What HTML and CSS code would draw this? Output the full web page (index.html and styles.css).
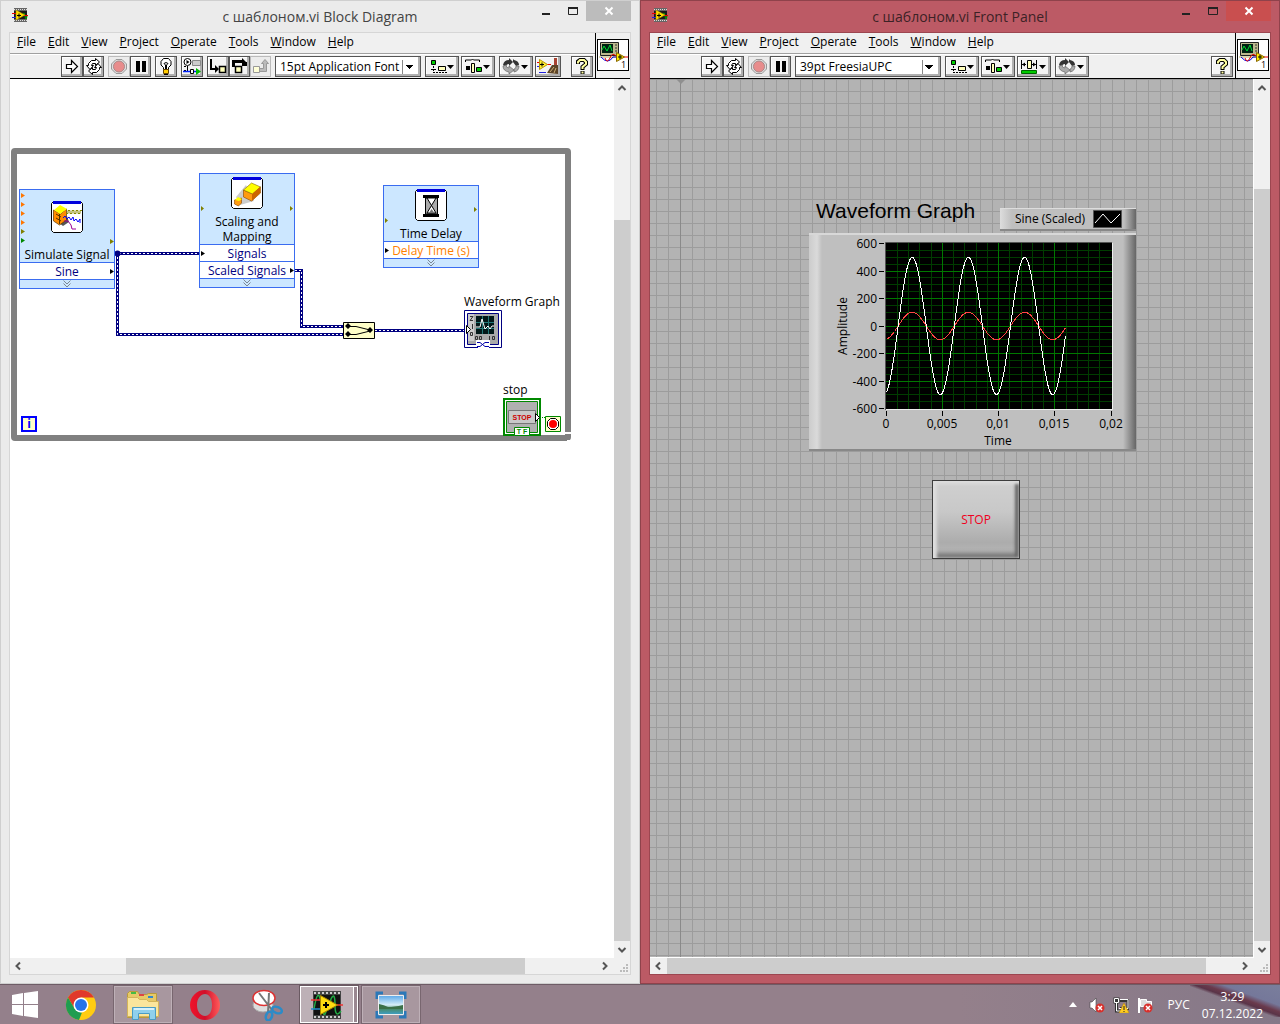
FILE: index.html
```html
<!DOCTYPE html>
<html lang="en">
<head>
<meta charset="utf-8">
<title>LabVIEW</title>
<link rel="stylesheet" href="styles.css">
</head>
<body>
<svg class="sprite" aria-hidden="true">
  <symbol id="i-app" viewBox="0 0 16 14">
    <path fill="#666" d="M2 0h13v14H2z"/><path stroke="#ddd" stroke-dasharray="1 1" d="M2 1.500h13M2 12.500h13"/>
    <path fill="#1a1a1a" d="M2 3h13v8H2z"/><path stroke="#0a0" fill="none" d="M11 8q1-6 2 0t2 0"/>
    <path stroke="#e00" d="M0 5.500h4M12 7.500h4"/><path stroke="#22d" d="M0 9.500h4"/>
    <path fill="#fd0" stroke="#a80" stroke-width=".5" d="M4 2l9 5-9 5z"/><path stroke="#000" d="M5 7.500h4M7 5.500v4"/>
  </symbol>
  <symbol id="i-run" viewBox="0 0 20 19"><path fill="#fff" stroke="#000" stroke-width="1.200" d="M4.500 7.500h5v-4l6 6-6 6v-4h-5z"/></symbol>
  <symbol id="i-loop" viewBox="0 0 20 19">
    <path fill="#fff" stroke="#000" d="M4.500 8.500v-2l3-3h4v-2l4 3.500-4 3.500v-2h-3l-1 2h2l-3.500 4-3.500-4zM15.500 10.500v2l-3 3h-4v2l-4-3.500 4-3.500v2h3l1-2h-2l3.500-4 3.500 4z"/>
  </symbol>
  <symbol id="i-abort" viewBox="0 0 20 19">
    <path fill="#ddd" stroke="#999" d="M7 2.500h6l4.500 4.500v5L13 16.500H7L2.500 12V7z"/><circle cx="10" cy="9.500" r="5.500" fill="#e88c8c" stroke="#a88"/>
  </symbol>
  <symbol id="i-pause" viewBox="0 0 20 19"><path d="M5 4h4v11H5zM11 4h4v11h-4z"/></symbol>
  <symbol id="i-bulb" viewBox="0 0 20 19">
    <path fill="#fff" stroke="#000" d="M7.500 12.500v-2L5 8V4.500l2.500-3h5l2.500 3V8l-2.500 2.500v2z"/><path fill="none" stroke="#000" d="M9.500 12V8L8 6.500l2-1 2 1L10.500 8v4"/>
    <path fill="#fc0" stroke="#640" d="M7.500 12.500h5v4h-5z"/><path d="M8 17h4v1H8z"/>
  </symbol>
  <symbol id="i-retain" viewBox="0 0 20 19">
    <circle cx="5.500" cy="5" r="3.500" fill="#fff" stroke="#000"/><path d="M4.500 3l3 2-3 2zM5 9h1v5H5zM2 9h2v1H2zM2 13h2v1H2z"/>
    <path fill="#ccc" stroke="#888" d="M10.500 3.500h8v5h-8z"/><path stroke="#02f" stroke-width="1.500" d="M1 14.500h7M12 14.500h3"/><path fill="#fff" stroke="#000" d="M8.500 12.500h3v4h-3z"/><path fill="#0b0" d="M14 11l5 3.500-5 3.500z"/>
  </symbol>
  <symbol id="i-into" viewBox="0 0 20 19">
    <path d="M2 2h2v9h3V8l4 4-4 4v-3H2z"/><path fill="#ffb" stroke="#000" stroke-width="1.500" d="M11.500 9.500h6v6h-6z"/>
  </symbol>
  <symbol id="i-over" viewBox="0 0 20 19">
    <path d="M2 3h10V1l4 4h1v4h-5V6H5v4H2z"/><path fill="#ffb" stroke="#000" stroke-width="1.500" d="M5.500 9.500h6v6h-6z"/>
  </symbol>
  <symbol id="i-out" viewBox="0 0 20 19">
    <path fill="#bbb" stroke="#999" d="M8.500 14.500v-3h4V6.500h-2l3.500-4 3.500 4h-2v8z"/><path fill="#ffffd8" stroke="#999" d="M2.500 9.500h6v6h-6z"/>
  </symbol>
  <symbol id="i-align" viewBox="0 0 32 19">
    <path fill="#0c0" stroke="#000" d="M5.500 3.500h4v4h-4z"/><path fill="#ffb" stroke="#000" d="M12.500 9.500h7v4h-7z"/>
    <path stroke="#000" d="M7.500 9v5M5 12.500h5M7 15.500h14" stroke-dasharray="2 1"/><path d="M21 8h7l-3.500 4z"/>
  </symbol>
  <symbol id="i-dist" viewBox="0 0 32 19">
    <path fill="none" stroke="#000" d="M3.500 5v-2h6l1-1 1 1h6v2"/><path d="M4 9h4v4H4z"/><path fill="#ffb" stroke="#000" d="M9.500 6.500h3v9h-3z"/><path fill="#0c0" stroke="#000" d="M14.500 10.500h5v4h-5z"/><path d="M21 8h7l-3.500 4z"/>
  </symbol>
  <symbol id="i-resize" viewBox="0 0 32 19">
    <path stroke="#000" d="M3.500 3v9M18.500 3v9M4 7.500h4M14 7.500h5"/><path d="M4 7.500l3-2v4zM18 7.500l-3-2v4z"/><path fill="#ffb" stroke="#000" d="M9.500 3.500h4v8h-4z"/><path fill="#0c0" stroke="#060" d="M3.500 13.500h15v3h-15z"/><path d="M21 8h7l-3.500 4z"/>
  </symbol>
  <symbol id="i-order" viewBox="0 0 32 19">
    <path fill="#333" d="M3 8q1-5 6-5V1l4 4-4 4V7q-3 0-3 3zM19 8q0-4-5-5l-1-1v3l3 4z"/>
    <path fill="#aaa" stroke="#666" stroke-width=".7" d="M3 9q0 5 6 6v2l5-4-5-4v2q-3 0-3-3zM19 9q0 5-5 6v-3q2 0 2-3z"/><path d="M21 8h7l-3.500 4z"/>
  </symbol>
  <symbol id="i-clean" viewBox="0 0 24 19">
    <path stroke="#e00" d="M1 5.500h3M10 7.500h5"/><path stroke="#22d" d="M1 9.500h3M3 15.500h7"/><path fill="#fe3" stroke="#b90" d="M3.500 2.500l8 5-8 5z"/><path d="M4 7h4v1H4zM5.500 5.500h1v4h-1z"/>
    <path fill="#a43" d="M18 1h3v9h-3z"/><path fill="#5c4428" d="M16 8h6v9l-11-1z"/><path stroke="#ec8" stroke-width=".8" d="M18 10l-4 5M20 11l-2 5"/>
  </symbol>
  <symbol id="i-help" viewBox="0 0 20 19">
    <path fill="none" stroke="#000" stroke-width="4" d="M6 7V4.500l2-1.500h4l2 2v2l-3.500 3v3M10.500 14v3"/><path fill="none" stroke="#ffffa0" stroke-width="2" d="M6 6.500V5l2-2h4l2 2v2l-3.500 3v2M10.500 14.500v2"/>
  </symbol>
  <symbol id="i-vi" viewBox="0 0 32 32">
    <path fill="#fff" stroke="#000" stroke-width="2" d="M0 0h32v32H0z"/><path fill="#bdb98f" stroke="#222" d="M3.500 3.500h18v13h-18z"/><path fill="#021" d="M5 5h11v9H5z"/>
    <path fill="none" stroke="#0d3" d="M5 11l2-4 3 5 3-6 2 6"/><path stroke="#333" d="M18 6h2M18 9h2M18 12h2"/>
    <path fill="#ddd8b0" d="M2 17h20v2H2z"/><path fill="none" stroke="#00d" d="M4 18q7 8 12 0h4"/><path fill="none" stroke="#e00" d="M8 19q2 6 5 0 2-6 6-2M27 18h4"/>
    <path fill="#fe0" stroke="#860" d="M19.500 13.500l8 4.500-8 4.500z"/><path d="M21 17.500h4v1h-4zM22.500 16h1v4h-1z"/>
  </symbol>
  <symbol id="i-up" viewBox="0 0 16 16"><path fill="none" stroke="#555" stroke-width="2" d="M4.500 10L8 6.500 11.500 10"/></symbol>
  <symbol id="i-down" viewBox="0 0 16 16"><path fill="none" stroke="#555" stroke-width="2" d="M4.500 6L8 9.500 11.500 6"/></symbol>
  <symbol id="i-left" viewBox="0 0 16 16"><path fill="none" stroke="#555" stroke-width="2" d="M10 4.500L6.500 8l3.500 3.500"/></symbol>
  <symbol id="i-right" viewBox="0 0 16 16"><path fill="none" stroke="#555" stroke-width="2" d="M6 4.500L9.500 8 6 11.500"/></symbol>
  <symbol id="i-grip" viewBox="0 0 16 16"><path fill="#bbb" d="M12 6h2v2h-2zM9 9h2v2H9zM12 9h2v2h-2zM6 12h2v2H6zM9 12h2v2H9zM12 12h2v2h-2z"/></symbol>
  <symbol id="i-min" viewBox="0 0 10 10"><path fill="currentColor" d="M1 7h8v2H1z"/></symbol>
  <symbol id="i-max" viewBox="0 0 10 10"><path fill="none" stroke="currentColor" d="M.5 1.500h9v7h-9z"/><path fill="currentColor" d="M0 1h10v2H0z"/></symbol>
  <symbol id="i-close" viewBox="0 0 10 10"><path stroke="#fff" stroke-width="2" d="M1.500 1.500l7 7M8.500 1.500l-7 7"/></symbol>
  <symbol id="i-more" viewBox="0 0 8 8"><path fill="none" stroke="#7a8794" d="M.5.5L4 4 7.500.5M.5 3.500L4 7l3.500-3.500"/></symbol>
</svg>

<main class="desktop">
  <section class="window">
    <header class="titlebar">
      <svg class="app-icon" viewBox="0 0 16 14"><use href="#i-app"/></svg>
      <h1 class="title">с шаблоном.vi Block Diagram</h1>
      <div class="controls">
        <button class="ctl" aria-label="Minimize"><svg viewBox="0 0 10 10"><use href="#i-min"/></svg></button>
        <button class="ctl" aria-label="Maximize"><svg viewBox="0 0 10 10"><use href="#i-max"/></svg></button>
        <button class="ctl ctl-close" aria-label="Close"><svg viewBox="0 0 10 10"><use href="#i-close"/></svg></button>
      </div>
    </header>
    <div class="client">
      <div class="head">
        <div class="bars">
          <nav class="menu">
            <button><u>F</u>ile</button><button><u>E</u>dit</button><button><u>V</u>iew</button><button><u>P</u>roject</button><button><u>O</u>perate</button><button><u>T</u>ools</button><button><u>W</u>indow</button><button><u>H</u>elp</button>
          </nav>
          <div class="toolbar">
            <div class="group">
              <button class="tool" aria-label="Run"><svg viewBox="0 0 20 19"><use href="#i-run"/></svg></button>
              <button class="tool" aria-label="Run Continuously"><svg viewBox="0 0 20 19"><use href="#i-loop"/></svg></button>
            </div>
            <div class="group">
              <button class="tool tool-off" aria-label="Abort"><svg viewBox="0 0 20 19"><use href="#i-abort"/></svg></button>
              <button class="tool" aria-label="Pause"><svg viewBox="0 0 20 19"><use href="#i-pause"/></svg></button>
            </div>
            <button class="tool" aria-label="Highlight Execution"><svg viewBox="0 0 20 19"><use href="#i-bulb"/></svg></button>
            <button class="tool" aria-label="Retain Wire Values"><svg viewBox="0 0 20 19"><use href="#i-retain"/></svg></button>
            <div class="group">
              <button class="tool" aria-label="Step Into"><svg viewBox="0 0 20 19"><use href="#i-into"/></svg></button>
              <button class="tool" aria-label="Step Over"><svg viewBox="0 0 20 19"><use href="#i-over"/></svg></button>
              <button class="tool tool-off" aria-label="Step Out"><svg viewBox="0 0 20 19"><use href="#i-out"/></svg></button>
            </div>
            <select class="font" aria-label="Text Settings"><option>15pt Application Font</option></select>
            <div class="group group-gap">
              <button class="tool tool-wide" aria-label="Align Objects"><svg viewBox="0 0 32 19"><use href="#i-align"/></svg></button>
              <button class="tool tool-wide" aria-label="Distribute Objects"><svg viewBox="0 0 32 19"><use href="#i-dist"/></svg></button>
            </div>
            <div class="group group-gap">
              <button class="tool tool-wide" aria-label="Reorder"><svg viewBox="0 0 32 19"><use href="#i-order"/></svg></button>
              <button class="tool tool-mid" aria-label="Clean Up Diagram"><svg viewBox="0 0 24 19"><use href="#i-clean"/></svg></button>
            </div>
            <button class="tool tool-end" aria-label="Help"><svg viewBox="0 0 20 19"><use href="#i-help"/></svg></button>
          </div>
        </div>
        <div class="vi"><svg viewBox="0 0 32 32"><use href="#i-vi"/><text class="vi-num" x="24" y="29">1</text></svg></div>
      </div>
      <div class="view">
        <div class="canvas diagram">
          <div class="loop"></div>
          <svg class="wires" viewBox="10 79 600 400">
            <path class="wire" d="M115 253.500h84M117.500 253v81.500H343M295 270.500h6.500v56H343M375 330.500h90"/>
            <path class="dash" d="M115 253.500h84M117.500 253v81.500H343M295 270.500h6.500v56H343M375 330.500h90"/>
            <circle cx="117.500" cy="253.500" r="3" fill="#000080"/>
            <path fill="#ffffc8" stroke="#000" d="M343.500 322.500h31v16h-31z"/>
            <path fill="none" stroke="#000" d="M348 326.500h8l14 3.500M348 334.500h8l14-3.500"/>
            <path d="M345 326l3-3 3 3-3 3zM345 334l3-3 3 3-3 3zM367 330l3-3 3 3-3 3z"/>
            <path fill="#fff" d="M563 432h8v2h-8zM567 440h3v1h-3z"/>
            <path stroke="#080" stroke-dasharray="1 1" d="M540 417.500h5"/>
          </svg>
          <div class="node node-sim">
            <div class="node-head">
              <svg class="node-icon" viewBox="0 0 32 32"><path fill="#fff" stroke="#000" d="M2.500.5h27l2 2v27l-2 2h-27l-2-2v-27z"/><path fill="#00d" d="M2 0h28v3H2z"/>
                <path fill="#555" d="M8 22l8-7 2 6-6 4z"/><path fill="#ff8c00" stroke="#530" stroke-width=".7" d="M2.500 9v11l6 4 7-5V8l-6 5z"/><path fill="#ff0" d="M3 9l6-5 7 4-7 5z"/><path stroke="#530" fill="none" d="M5 13l5 3M5 17l5 3M8.500 13v10"/>
                <path fill="none" stroke="#880" d="M15 12.500h2v-3h2v3h2v-3h2v3h2v-3h2v3h2v-3h2"/><path fill="none" stroke="#00f" d="M12 17l2-2 2 3 2-2 2 3 2-3 1 4 2-2 2 3 2-3v4"/><path fill="none" stroke="#909" d="M13 20h4l3 4 1 4h4"/></svg>
              <span>Simulate Signal</span>
            </div>
            <div class="node-row">Sine</div>
            <div class="node-foot"><svg viewBox="0 0 8 8"><use href="#i-more"/></svg></div>
            <svg class="pins" viewBox="0 0 96 100"><g fill="#f70"><path d="M2 4l4 2.500L2 9zM2 13l4 2.500L2 18zM2 22l4 2.500L2 27zM2 31l4 2.500L2 36z"/></g><path fill="#808000" d="M2 40l4 2.500L2 45zM91 50l4 2.500-4 2.500z"/><path fill="#080" d="M2 49l4 2.500L2 54z"/><path d="M91 80l4 2.500-4 2.500z"/></svg>
          </div>
          <div class="node node-map">
            <div class="node-head">
              <svg class="node-icon" viewBox="0 0 32 32"><path fill="#fff" stroke="#000" d="M2.500.5h27l2 2v27l-2 2h-27l-2-2v-27z"/><path fill="#00d" d="M2 0h28v3H2z"/>
                <path fill="#ccc" d="M5 20l10-12 8 16-14 4z"/><path fill="#ff9a10" stroke="#840" stroke-width=".6" d="M12.500 13v7l8 4 9-8v-6l-8 7z"/><path fill="#ff0" stroke="#860" stroke-width=".6" d="M12.500 13l8-7 9 4-8 7z"/><path fill="#c60" d="M21 17l8-7v6l-8 8z"/><path fill="#ff9a10" stroke="#840" stroke-width=".6" d="M3.500 23v4l4 2 3-3v-5z"/><path fill="#ff0" d="M4 23l3-3 4 2-3 2z"/></svg>
              <span>Scaling and Mapping</span>
            </div>
            <div class="node-row">Signals</div>
            <div class="node-row">Scaled Signals</div>
            <div class="node-foot"><svg viewBox="0 0 8 8"><use href="#i-more"/></svg></div>
            <svg class="pins" viewBox="0 0 96 115"><path fill="#808000" d="M2 33l3 2.500L2 38zM91 33l3 2.500-3 2.500z"/><path d="M2 78l4 2.500L2 83zM91 95l4 2.500-4 2.500z"/></svg>
          </div>
          <div class="node node-delay">
            <div class="node-head">
              <svg class="node-icon" viewBox="0 0 32 32"><path fill="#fff" stroke="#000" d="M2.500.5h27l2 2v27l-2 2h-27l-2-2v-27z"/><path fill="#00d" d="M2 0h28v3H2z"/>
                <path d="M8 6h16v3H8zM8 25h16v3H8z"/><path fill="#aaa" stroke="#000" d="M10.500 9v16h12V9z"/><path fill="#fff" stroke="#000" d="M12 9l9 15h-9l9-15z"/><path fill="#777" d="M14 24l2.500-4 3 4z"/></svg>
              <span>Time Delay</span>
            </div>
            <div class="node-row node-row-orange">Delay Time (s)</div>
            <div class="node-foot"><svg viewBox="0 0 8 8"><use href="#i-more"/></svg></div>
            <svg class="pins" viewBox="0 0 96 83"><path fill="#808000" d="M2 33l3 2.500L2 38zM91 22l3 2.500-3 2.500z"/><path d="M2 63l4 2.500L2 68z"/></svg>
          </div>
          <div class="terminal term-graph">
            <span>Waveform Graph</span>
            <svg viewBox="0 0 38 38" width="38" height="38"><path fill="#fff" stroke="#000080" d="M.5.500h37v37H.5z"/><path fill="#aaa" stroke="#000080" d="M3.500 3.500h31v31h-31z"/><path fill="#ccc" d="M4 4h6v27H4z"/>
              <path fill="#021818" d="M12 6h18v18H12z"/><path stroke="#277" d="M12 12.500h18M12 18.500h18M18.500 6v18M24.500 6v18"/><path fill="none" stroke="#fff" d="M12 17h4l2-8 3 10 3-3 2 3 2-3h2"/>
              <path stroke="#333" fill="none" d="M6 6.500h3l-3 4h3M8.500 14v5M6.500 22.500h2v3h-2zM11.500 26.500h2v3h-2zM15.500 26.500h2v3h-2zM25.500 26v4M28.500 26.500h2v3h-2z"/><path fill="#fff" stroke="#000" d="M2.500 15.500l4 4-4 4z"/>
              <path fill="#fff" stroke="#fff" d="M12.500 30.500h13v7h-13z"/><path fill="none" stroke="#00a" d="M13 32.500h3l5 4h4M13 36.500h3l5-4h4M12 37.500h2M25 37.500h2"/></svg>
          </div>
          <div class="terminal term-stop">
            <span>stop</span>
            <svg viewBox="0 0 38 38" width="38" height="38"><path fill="#fff" stroke="#080" stroke-width="2" d="M1 1h36v36H1z"/><path fill="#b0b0b0" stroke="#080" d="M3.500 3.500h31v31h-31z"/><path fill="#c8c8c8" stroke="#777" d="M5.500 12.500h27v13h-27z"/><path fill="#fff" stroke="#000" d="M32.500 15.500l4 4-4 4z"/><path fill="#fff" stroke="#080" d="M11.500 29.500h15v8h-15z"/>
              <text class="tiny tiny-red" x="19" y="22">STOP</text><text class="tiny tiny-green" x="19" y="36">T F</text></svg>
          </div>
          <div class="iter">i</div>
          <svg class="cond" viewBox="0 0 16 16"><path fill="#ffffc8" stroke="#080" d="M.5.500h15v15H.5z"/><path fill="#fff" stroke="#000" d="M5.500 2.500h5l3 3v5l-3 3h-5l-3-3v-5z"/><circle cx="8" cy="8" r="4" fill="#f00"/></svg>
        </div>
        <div class="vbar">
          <button class="arrow" aria-label="Scroll up"><svg viewBox="0 0 16 16"><use href="#i-up"/></svg></button>
          <div class="track track-a"><div class="thumb"></div></div>
          <button class="arrow" aria-label="Scroll down"><svg viewBox="0 0 16 16"><use href="#i-down"/></svg></button>
        </div>
      </div>
      <div class="hbar">
        <button class="arrow" aria-label="Scroll left"><svg viewBox="0 0 16 16"><use href="#i-left"/></svg></button>
        <div class="track track-b"><div class="thumb"></div></div>
        <button class="arrow" aria-label="Scroll right"><svg viewBox="0 0 16 16"><use href="#i-right"/></svg></button>
        <svg class="grip" viewBox="0 0 16 16"><use href="#i-grip"/></svg>
      </div>
    </div>
  </section>

  <section class="window window-active">
    <header class="titlebar">
      <svg class="app-icon" viewBox="0 0 16 14"><use href="#i-app"/></svg>
      <h1 class="title">с шаблоном.vi Front Panel</h1>
      <div class="controls">
        <button class="ctl" aria-label="Minimize"><svg viewBox="0 0 10 10"><use href="#i-min"/></svg></button>
        <button class="ctl" aria-label="Maximize"><svg viewBox="0 0 10 10"><use href="#i-max"/></svg></button>
        <button class="ctl ctl-close" aria-label="Close"><svg viewBox="0 0 10 10"><use href="#i-close"/></svg></button>
      </div>
    </header>
    <div class="client">
      <div class="head">
        <div class="bars">
          <nav class="menu">
            <button><u>F</u>ile</button><button><u>E</u>dit</button><button><u>V</u>iew</button><button><u>P</u>roject</button><button><u>O</u>perate</button><button><u>T</u>ools</button><button><u>W</u>indow</button><button><u>H</u>elp</button>
          </nav>
          <div class="toolbar">
            <div class="group">
              <button class="tool" aria-label="Run"><svg viewBox="0 0 20 19"><use href="#i-run"/></svg></button>
              <button class="tool" aria-label="Run Continuously"><svg viewBox="0 0 20 19"><use href="#i-loop"/></svg></button>
            </div>
            <div class="group">
              <button class="tool tool-off" aria-label="Abort"><svg viewBox="0 0 20 19"><use href="#i-abort"/></svg></button>
              <button class="tool" aria-label="Pause"><svg viewBox="0 0 20 19"><use href="#i-pause"/></svg></button>
            </div>
            <select class="font" aria-label="Text Settings"><option>39pt FreesiaUPC</option></select>
            <div class="group group-gap">
              <button class="tool tool-wide" aria-label="Align Objects"><svg viewBox="0 0 32 19"><use href="#i-align"/></svg></button>
              <button class="tool tool-wide" aria-label="Distribute Objects"><svg viewBox="0 0 32 19"><use href="#i-dist"/></svg></button>
              <button class="tool tool-wide" aria-label="Resize Objects"><svg viewBox="0 0 32 19"><use href="#i-resize"/></svg></button>
            </div>
            <button class="tool tool-wide" aria-label="Reorder"><svg viewBox="0 0 32 19"><use href="#i-order"/></svg></button>
            <button class="tool tool-end" aria-label="Help"><svg viewBox="0 0 20 19"><use href="#i-help"/></svg></button>
          </div>
        </div>
        <div class="vi"><svg viewBox="0 0 32 32"><use href="#i-vi"/><text class="vi-num" x="24" y="29">1</text></svg></div>
      </div>
      <div class="view">
        <div class="canvas panel">
          <div class="origin"></div>
          <svg class="origin-mark" viewBox="0 0 10 5"><path fill="#8f8f8f" d="M0 0h10L5 5z"/></svg>
          <div class="graph">
            <div class="graph-top">
              <h2 class="graph-title">Waveform Graph</h2>
              <div class="legend"><span>Sine (Scaled)</span><svg viewBox="0 0 29 18"><path fill="#000" stroke="#555" d="M.5.500h28v17H.5z"/><path fill="none" stroke="#fff" d="M2 13l8-9 8 9 9-9"/></svg></div>
            </div>
            <div class="plate">
              <svg id="chart" class="chart" viewBox="809 233 327 218" role="img" aria-label="Waveform Graph">
                <path fill="#000" d="M886 243h226v166H886z"/>
                <g id="grid"></g>
                <path fill="none" stroke="#555" d="M885.500 410V242.500H1112"/><path fill="none" stroke="#eee" d="M886 409.500h226.500V243"/>
                <polyline id="red" class="line line-red"/>
                <polyline id="white" class="line line-white"/>
                <g id="labels" class="axis"></g>
                <text class="axis mid" x="998" y="445">Time</text>
                <text class="axis mid" transform="translate(847 326) rotate(-90)">Amplitude</text>
              </svg>
            </div>
          </div>
          <button class="stop">STOP</button>
        </div>
        <div class="vbar">
          <button class="arrow" aria-label="Scroll up"><svg viewBox="0 0 16 16"><use href="#i-up"/></svg></button>
          <div class="track track-c"><div class="thumb"></div></div>
          <button class="arrow" aria-label="Scroll down"><svg viewBox="0 0 16 16"><use href="#i-down"/></svg></button>
        </div>
      </div>
      <div class="hbar">
        <button class="arrow" aria-label="Scroll left"><svg viewBox="0 0 16 16"><use href="#i-left"/></svg></button>
        <div class="track track-d"><div class="thumb"></div></div>
        <button class="arrow" aria-label="Scroll right"><svg viewBox="0 0 16 16"><use href="#i-right"/></svg></button>
        <svg class="grip" viewBox="0 0 16 16"><use href="#i-grip"/></svg>
      </div>
    </div>
  </section>
</main>

<footer class="taskbar">
  <button class="task task-start" aria-label="Start"><svg viewBox="0 0 28 28" width="28" height="28"><path fill="#fff" d="M1 4l11-2v11H1zM13 2l14-2v13H13zM1 14h11v11L1 23zM13 14h14v13l-14-2z"/></svg></button>
  <button class="task" aria-label="Chrome"><svg viewBox="0 0 32 32" width="32" height="32"><circle cx="16" cy="16" r="15" fill="#fc1"/><path fill="#e0392b" d="M3 8.500a15 15 0 0 1 26 0H16l-6.500 11z"/><path fill="#1f9d50" d="M3 8.500l6.500 11L16 23.500h1L14 31A15 15 0 0 1 3 8.500z"/><circle cx="16" cy="16" r="7.500" fill="#fff"/><circle cx="16" cy="16" r="6" fill="#2573ea"/></svg></button>
  <button class="task task-open" aria-label="File Explorer"><svg viewBox="0 0 34 30" width="34" height="30"><path fill="#e6c968" stroke="#b99a3c" d="M1.500 3.500l2-2h8l2 3h7l2-1h8v24h-29z"/><path fill="#4b4" d="M5 2h5v2H5z"/><path fill="#d44" d="M13 4h5v2h-5z"/><path fill="#38c" d="M22 6h5v2h-5z"/><path fill="#fae59c" stroke="#d3b45a" d="M1.500 7.500h10l2 2h7l2 2h10v15h-31z"/><path fill="#8fd0ec" stroke="#4a9cc4" d="M6.500 29.500v-12h23v12h-6v-6h-11v6z"/><path fill="#d8f2fc" d="M8 18h20v2H8z"/></svg></button>
  <button class="task" aria-label="Opera"><svg viewBox="0 0 32 32" width="32" height="32"><defs><linearGradient id="op" x2="1" y2="0"><stop stop-color="#f0142c"/><stop offset=".5" stop-color="#d0102a"/><stop offset="1" stop-color="#ff5b5b"/></linearGradient></defs><path fill="url(#op)" fill-rule="evenodd" d="M16 1a15 15 0 1 0 0 30 15 15 0 0 0 0-30zm0 4c4 0 7 4 7 11s-3 11-7 11-8-4-8-11 4-11 8-11z"/></svg></button>
  <button class="task" aria-label="Snipping Tool"><svg viewBox="0 0 32 32" width="32" height="32"><ellipse cx="12" cy="16" rx="10" ry="7" fill="#ddd" stroke="#aaa"/><ellipse cx="13" cy="9" rx="11" ry="7.500" fill="#fff" stroke="#d33" stroke-width="1.500"/><path stroke="#777" stroke-width="2" d="M8 4l13 17M18 4l-1 20"/><g fill="none" stroke="#2b8bc8" stroke-width="2.500"><ellipse cx="26" cy="21" rx="5" ry="3" transform="rotate(20 26 21)"/><ellipse cx="18" cy="27" rx="3" ry="4.500" transform="rotate(20 18 27)"/></g></svg></button>
  <button class="task task-open task-current" aria-label="LabVIEW"><svg viewBox="0 0 32 28" width="32" height="28"><path fill="#444" d="M2 0h28v28H2z"/><path stroke="#ccc" stroke-width="2" stroke-dasharray="2 2" d="M3 2h26M3 26h26"/><path fill="#111" d="M3 4h26v20H3z"/><path fill="none" stroke="#2a4" stroke-width="1.500" d="M3 18q4-24 7-6t5 8q3-2 5-12 4-8 4 6t6 6"/><path stroke="#e33" stroke-width="1.500" d="M0 9h10M24 14h8"/><path stroke="#28c" stroke-width="1.500" d="M0 18h10"/><path fill="#fd1" stroke="#a80" d="M9.500 4.500l17 9.500-17 9.500z"/><path stroke="#000" stroke-width="2" d="M12 14h6M15 11v6"/></svg></button>
  <button class="task task-open" aria-label="Pictures"><svg viewBox="0 0 32 28" width="32" height="28"><defs><linearGradient id="ph" x2="0" y2="1"><stop stop-color="#59a7e8"/><stop offset=".5" stop-color="#d8eef8"/><stop offset=".7" stop-color="#4a8a68"/><stop offset="1" stop-color="#3c9fc8"/></linearGradient></defs><path fill="none" stroke="#2b78b8" stroke-width="3" d="M2 8V2h6M24 2h6v6M30 20v6h-6M8 26H2v-6"/><path fill="url(#ph)" stroke="#eee" d="M3.500 4.500h25v19h-25z"/><path fill="#3c7048" d="M4 13q5 1 9 3 6 0 15-2v4H4z"/></svg></button>
  <div class="tray">
    <svg viewBox="0 0 8 5" width="8" height="5"><path fill="#fff" d="M4 0l4 5H0z"/></svg>
    <svg viewBox="0 0 16 16" width="16" height="16"><path fill="#fff" stroke="#444" stroke-width=".6" d="M1 5h2l4-4v14l-4-4H1z"/><circle cx="11" cy="11" r="4.500" fill="#d8302c"/><path stroke="#fff" stroke-width="1.500" d="M9 9l4 4M13 9l-4 4"/></svg>
    <svg viewBox="0 0 16 16" width="16" height="16"><path fill="none" stroke="#333" stroke-width="3" d="M2 2h3v3H2zM7 3.500h8v8H7M3.500 6v8h4"/><path fill="none" stroke="#fff" d="M1.500 1.500h4v4h-4zM7 2.500h8v9H6M3.500 6v8h4"/><path fill="#fc2" stroke="#b80" stroke-width=".5" d="M11 6l5 10H6z"/><path stroke="#222" d="M11 9v4M11 14v1"/></svg>
    <svg viewBox="0 0 16 16" width="16" height="16"><path stroke="#fff" stroke-width="2" d="M2 1v15"/><path fill="#ddd" stroke="#fff" d="M3.500 2.500h6v2h5v7h-6v-2h-5z"/><circle cx="11" cy="11" r="4.500" fill="#d8302c"/><path stroke="#fff" stroke-width="1.500" d="M9 9l4 4M13 9l-4 4"/></svg>
    <span class="lang">РУС</span>
    <div class="clock"><span>3:29</span><span>07.12.2022</span></div>
  </div>
</footer>
<script src="chart.js"></script>
</body>
</html>
```
FILE: chart.js
```js
const LEFT = 886, TOP = 243.5, WIDTH = 225, HEIGHT = 165;
const ZERO = TOP + HEIGHT / 2;
const NS = "http://www.w3.org/2000/svg";

function add(parent, name, attrs, text) {
  const el = document.createElementNS(NS, name);
  for (const key in attrs) el.setAttribute(key, attrs[key]);
  if (text !== undefined) el.textContent = text;
  parent.appendChild(el);
}

const grid = document.getElementById("grid");
const crisp = v => Math.floor(v) + 0.5;
for (const major of [false, true]) {
  const cls = major ? "major" : "minor";
  for (let i = 1; i < 20; i++) {
    if ((i % 5 === 0) !== major) continue;
    const x = crisp(LEFT + i * WIDTH / 20);
    add(grid, "path", { class: cls, d: `M${x} 243V409` });
  }
  for (let i = 1; i < 24; i++) {
    if ((i % 4 === 0) !== major) continue;
    const y = crisp(TOP + i * HEIGHT / 24);
    add(grid, "path", { class: cls, d: `M886 ${y}H1112` });
  }
}

const labels = document.getElementById("labels");
["600", "400", "200", "0", "-200", "-400", "-600"].forEach((t, i) => {
  const y = crisp(TOP + i * HEIGHT / 6);
  add(labels, "path", { class: "tick", d: `M879 ${y}h5` });
  add(labels, "text", { class: "end", x: 877, y: y + 4.5 }, t);
});
["0", "0,005", "0,01", "0,015", "0,02"].forEach((t, i) => {
  const x = crisp(LEFT + i * WIDTH / 4);
  add(labels, "path", { class: "tick", d: `M${x} 411v5` });
  add(labels, "text", { class: "mid", x: x - 0.5, y: 428 }, t);
});

function wave(id, amplitude) {
  const points = [];
  for (let x = 0; x < 180; x++) {
    const v = amplitude * Math.cos(2 * Math.PI * (x - 25.7) / 56.2);
    points.push(`${LEFT + x + 0.5},${(ZERO - v * HEIGHT / 1200).toFixed(1)}`);
  }
  document.getElementById(id).setAttribute("points", points.join(" "));
}
wave("red", 100);
wave("white", 500);
```
FILE: styles.css
```css
* { box-sizing: border-box; }
body {
  margin: 0;
  min-height: 100vh;
  display: grid;
  grid-template-rows: 1fr 40px;
  font: 12px/16px "Open Sans", "Noto Sans", sans-serif;
  color: #000;
}
button, select { font: inherit; color: inherit; margin: 0; padding: 0; border: 0; background: none; }
svg { display: block; }
.sprite { position: absolute; width: 0; height: 0; }

.desktop { display: grid; grid-template-columns: 1fr 1fr; }
.window {
  display: flex;
  flex-direction: column;
  border: 1px solid #cfcfcf;
  background: #ebebeb;
  padding: 0 8px 8px;
  color: #000;
  min-width: 0;
}
.window-active { background: #bc5a65; border-color: #8f424b; }
.titlebar { display: grid; grid-template-columns: 1fr auto 1fr; height: 31px; }
.app-icon { width: 16px; height: 14px; margin: 7px 0 0 3px; }
.title { margin: 6px 0 0; font-size: 14px; line-height: 20px; font-weight: 400; color: #444; }
.window-active .title { color: #3c2226; }
.controls { display: flex; justify-content: flex-end; align-items: flex-start; color: #222; }
.ctl { width: 27px; height: 20px; display: grid; place-items: center; }
.ctl svg { width: 10px; height: 10px; }
.ctl-close { width: 45px; background: #bcbcbc; }
.window-active .ctl-close { background: #c94f4f; }

.client { flex: 1; display: flex; flex-direction: column; border: 1px solid #d6d6d6; background: #f0f0f0; }
.window-active .client { border-color: #9c4650; }
.head { display: flex; height: 46px; border-bottom: 1px solid #000; }
.bars { flex: 1; min-width: 0; }
.menu { display: flex; height: 21px; padding-left: 1px; border-bottom: 1px solid #a0a0a0; }
.menu button { padding: 0 6px; height: 18px; }
.toolbar { display: flex; gap: 4px; padding: 1px 2px 0 51px; border-top: 1px solid #fff; }
.group { display: flex; }
.group-gap { gap: 2px; }
.tool {
  width: 22px;
  height: 21px;
  border: 1px solid #555;
  background: #f4f4f4;
  box-shadow: inset -2px -2px #b0b0b0, inset 1px 1px #fff;
}
.group:not(.group-gap) .tool + .tool { width: 21px; }
.tool svg { width: 20px; height: 19px; }
.tool-off { border-color: #bbb; box-shadow: none; background: #ececec; }
.tool-wide { width: 34px; }
.tool-wide svg { width: 32px; }
.tool-mid { width: 26px; }
.tool-mid svg { width: 24px; }
.tool-end { margin-left: auto; }
.font {
  appearance: none;
  width: 146px;
  height: 21px;
  padding-left: 4px;
  border: 1px solid #555;
  background:
    conic-gradient(from -45deg at 50% 100%, #000 90deg, transparent 0) right 7px top 8px / 8px 4px no-repeat,
    linear-gradient(#888, #888) right 17px center / 1px 14px no-repeat,
    #fff;
  box-shadow: inset -2px -2px #b0b0b0;
}
.vi { width: 35px; border-left: 1px solid #000; padding: 6px 1px 0; }
.vi svg { width: 32px; height: 32px; }
.vi-num { font: 9px "Open Sans", sans-serif; }

.view { flex: 1; display: flex; min-height: 0; }
.canvas { flex: 1; position: relative; overflow: hidden; background: #fff; }
.vbar { width: 16px; display: flex; flex-direction: column; }
.hbar { height: 16px; display: flex; }
.arrow { width: 17px; height: 17px; flex: none; }
.hbar .arrow { height: 16px; }
.arrow svg, .grip { width: 16px; height: 16px; }
.track { flex: 1; display: grid; }
.thumb { background: #cdcdcd; }
.track-a { grid-template-rows: 124fr 720fr; }
.track-b { grid-template-columns: 99fr 399fr 72fr; }
.track-c { grid-template-rows: 93fr 751fr; }
.track-d { grid-template-columns: 539fr 31fr; }
.track-a .thumb, .track-c .thumb { grid-row: 2; }
.track-b .thumb { grid-column: 2; }

.loop { position: absolute; left: 1px; top: 69px; width: 560px; height: 293px; border: 6px solid #808080; border-radius: 4px; }
.wires { position: absolute; left: 0; top: 0; width: 600px; height: 400px; }
.wire { fill: none; stroke: #000080; stroke-width: 3; }
.dash { fill: none; stroke: #fff; stroke-dasharray: 2 2; }
.node { position: absolute; width: 96px; border: 1px solid #3a6cf0; background: #cce7ff; text-align: center; }
.node-sim { left: 9px; top: 110px; }
.node-map { left: 189px; top: 94px; }
.node-delay { left: 373px; top: 106px; }
.node-head { display: flex; flex-direction: column; align-items: center; padding-top: 3px; line-height: 15px; }
.node-sim .node-head { padding-top: 11px; }
.node-icon { width: 32px; height: 32px; margin-bottom: 5px; }
.node-sim .node-icon { margin-bottom: 14px; }
.node-row { height: 17px; line-height: 18px; border-top: 1px solid #3a6cf0; background: #fff; color: #000080; }
.node-row-orange { color: #ff7f00; }
.node-foot { height: 9px; border-top: 1px solid #3a6cf0; display: grid; place-items: center; }
.node-foot svg { width: 8px; height: 8px; }
.pins { position: absolute; left: -1px; top: -1px; width: 96px; }
.terminal { position: absolute; line-height: 15px; white-space: nowrap; }
.terminal span { display: block; }
.term-graph { left: 454px; top: 215px; }
.term-stop { left: 493px; top: 303px; }
.terminal svg { margin-top: 1px; }
.tiny { font: bold 7px "Liberation Sans", sans-serif; text-anchor: middle; }
.tiny-red { fill: #c00; }
.tiny-green { fill: #080; }
.iter { position: absolute; left: 11px; top: 337px; width: 16px; height: 16px; border: 2px solid #00f; background: #ffffc8; color: #00f; font-weight: 700; line-height: 12px; text-align: center; }
.cond { position: absolute; left: 535px; top: 337px; width: 16px; height: 16px; }

.panel {
  border: solid #fff;
  border-width: 0 1px 1px 0;
  background:
    linear-gradient(90deg, #9c9c9c 1px, transparent 1px) 6px 0 / 12px 12px,
    linear-gradient(#9c9c9c 1px, transparent 1px) 0 0 / 12px 12px,
    #b3b3b3;
}
.origin { position: absolute; left: 30px; top: 0; bottom: 0; width: 1px; background: #8a8a8a; }
.origin-mark { position: absolute; left: 26px; top: 0; width: 10px; height: 5px; }
.graph { position: absolute; left: 159px; top: 120px; width: 327px; }
.graph-top { display: flex; justify-content: space-between; align-items: flex-end; padding-left: 7px; height: 33px; }
.graph-title { margin: 0; font: 400 21px/24px "Liberation Sans", sans-serif; padding-bottom: 9px; }
.legend {
  display: flex;
  justify-content: space-between;
  width: 136px;
  height: 23px;
  margin-bottom: 1px;
  padding: 2px 14px 0 15px;
  line-height: 18px;
  background: linear-gradient(90deg, #ddd, #bfbfbf 12px, #bfbfbf 124px, #666);
  box-shadow: inset 0 1px #ddd, inset 0 -2px #888;
}
.legend svg { width: 29px; height: 18px; }
.plate {
  margin-top: 1px;
  background: linear-gradient(90deg, #ccc, #dadada 8px, #bfbfbf 13px, #bfbfbf 314px, #666);
  box-shadow: inset 0 2px #d8d8d8, inset 0 -2px #888;
}
.chart { width: 327px; height: 218px; }
.minor { stroke: #003c00; }
.major { stroke: #007800; }
.line { fill: none; stroke-width: 1; shape-rendering: crispEdges; }
.line-red { stroke: #ff4545; }
.line-white { stroke: #fff; }
.tick { stroke: #000; }
.axis { font-size: 12px; }
.end { text-anchor: end; }
.mid { text-anchor: middle; }
.stop {
  position: absolute;
  left: 282px;
  top: 401px;
  width: 88px;
  height: 79px;
  border: 1px solid #3c3c3c;
  color: #f00020;
  background: linear-gradient(#d0d0d0, #c8c8c8 40%, #acacac 80%, #bbb);
  box-shadow: inset 4px 0 3px #ddd, inset 0 3px 3px #ddd, inset -4px 0 3px #666, inset 0 -5px 4px #777;
}

.taskbar {
  display: flex;
  align-items: stretch;
  border-top: 1px solid #6e5c66;
  background:
    linear-gradient(20deg, transparent 47%, #5a3448 52%, #6a3a4c 58%, #75789a 68%, #7a7e9c) right top / 90px 32px no-repeat,
    linear-gradient(90deg, #94808b 0, #94808b 75%, #857888);
  color: #fff;
}
.task { width: 62px; display: grid; place-items: center; }
.task-start { width: 50px; }
.task-open { width: 60px; margin: 0 1px; background: #a8979f; border: 1px solid #78666f; box-shadow: inset 0 0 0 1px #beb0b7; }
.task-current { background: #bdb0b6; border-color: #6a5a62; box-shadow: inset 0 0 0 1px #fff, inset -4px 0 #998790, inset -5px 0 #fff; padding-right: 5px; }
.tray { margin-left: auto; display: flex; align-items: center; gap: 8px; padding-right: 17px; }
.tray svg:first-child { margin-right: 4px; }
.lang { margin: 0 4px 0 7px; }
.clock { display: flex; flex-direction: column; align-items: center; line-height: 17px; }
```
